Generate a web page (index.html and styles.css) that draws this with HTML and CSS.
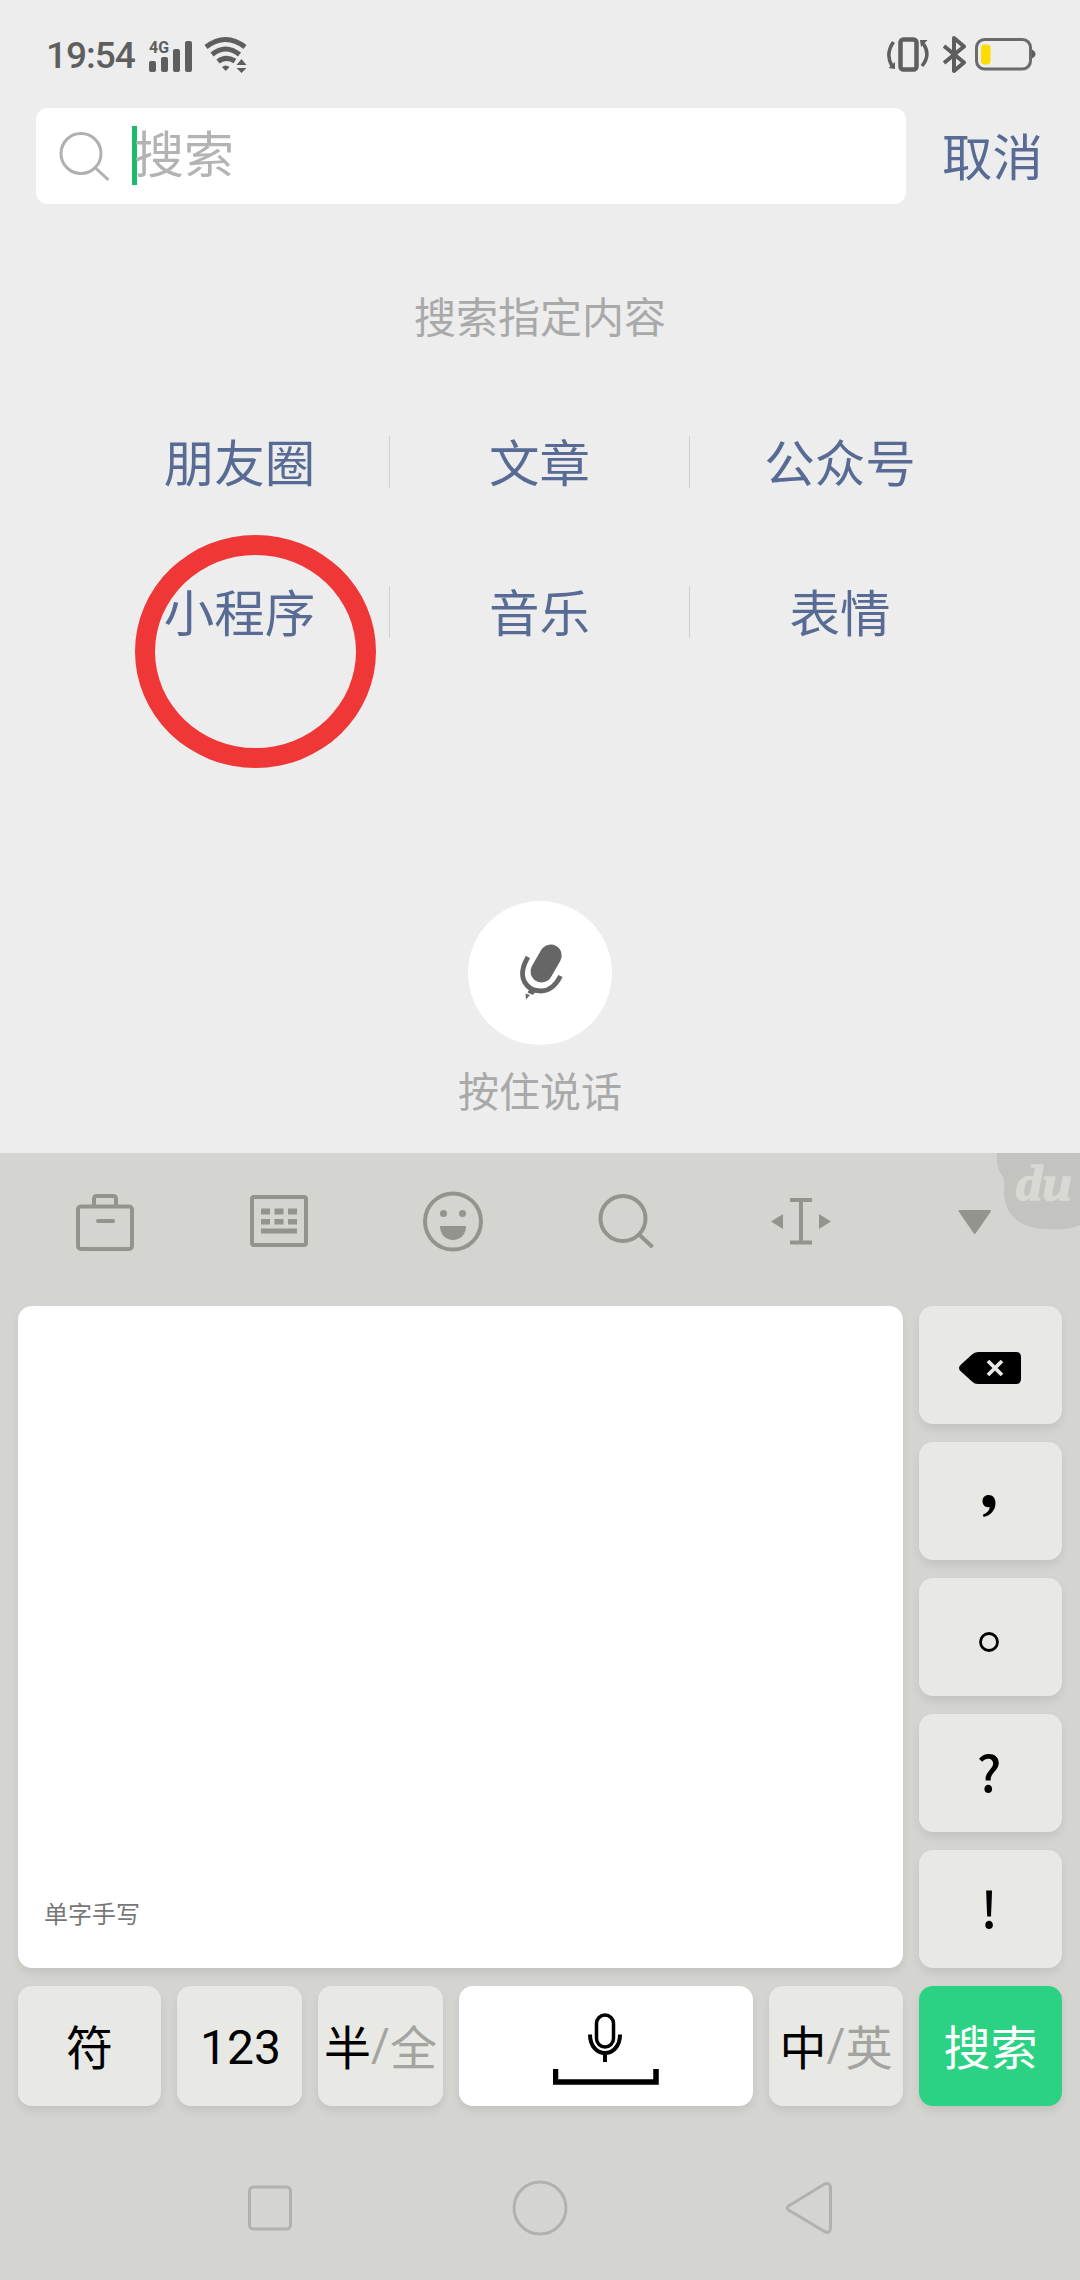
FILE: index.html
```html
<!DOCTYPE html>
<html lang="zh-CN">
<head>
  <meta charset="UTF-8">
  <meta name="viewport" content="width=device-width, initial-scale=1.0">
  <title>搜索</title>
  <link rel="stylesheet" href="styles.css">
</head>
<body>

  <div class="status-bar">
    <div class="status-left">
      <span class="time">19:54</span>
      <svg class="signal" width="46" height="38" viewBox="0 -4 46 38">
        <text class="net" x="0" y="13" textLength="20" lengthAdjust="spacingAndGlyphs">4G</text>
        <rect x="0" y="21" width="7" height="11" rx="2"/>
        <rect x="12" y="17" width="7" height="15" rx="2"/>
        <rect x="24" y="9" width="7" height="23" rx="2"/>
        <rect x="36" y="1" width="7" height="31" rx="2"/>
      </svg>
      <svg class="wifi" width="46" height="38" viewBox="0 0 46 38">
        <g fill="none" stroke="#5e5e5e" stroke-width="5">
          <path d="M2 11 Q21.500 -4 41 11"/>
          <path d="M8 18.500 Q21.500 7.500 35.500 18.500"/>
          <path d="M14 25.500 Q21.500 19.500 31 25"/>
        </g>
        <path d="M18 31 Q21.500 28 25.500 31 L21.700 35Z"/>
        <path d="M37.500 23 l5 6 h-10z M37.500 37 l5 -5 h-10z"/>
      </svg>
    </div>
    <div class="status-right">
      <svg width="44" height="38" viewBox="0 0 44 38">
        <rect x="14.500" y="3.500" width="16" height="30" rx="3" fill="none" stroke="#5e5e5e" stroke-width="4.500"/>
        <path d="M7.500 6 Q-1 18 6 30 M37.500 8 Q45 19 36 30" fill="none" stroke="#5e5e5e" stroke-width="3.500"/>
        <path d="M2.500 32 L9 26 V33Z M34 4 H41.500 L35 11Z"/>
      </svg>
      <svg width="28" height="42" viewBox="0 0 28 42">
        <path d="M1 12 L21 28.500 L11 37 V4 L21 12.500 L1 29" fill="none" stroke="#5e5e5e" stroke-width="4" stroke-linejoin="round"/>
      </svg>
      <svg class="battery" width="62" height="34" viewBox="0 0 62 34">
        <rect x="1.500" y="1.500" width="54" height="29.500" rx="8" fill="none" stroke="#696b6c" stroke-width="3"/>
        <path d="M57 11.500 q3.500 2 3.500 4.500 t-3.500 4.500z"/>
        <rect x="6" y="6.500" width="9.500" height="20" rx="3.500" fill="#fbdc05"/>
      </svg>
    </div>
  </div>

  <div class="search-row">
    <div class="search-box">
      <svg width="56" height="56" viewBox="0 0 56 56">
        <g fill="none" stroke="#b0b0b0" stroke-width="3">
          <circle cx="25" cy="24.500" r="20"/>
          <path d="M39 38.500 L52.500 51"/>
        </g>
      </svg>
      <span class="caret"></span>
      <span class="placeholder">搜索</span>
    </div>
    <a class="cancel">取消</a>
  </div>

  <div class="content">
    <p class="hint">搜索指定内容</p>
    <div class="types">
      <a>朋友圈</a>
      <a>文章</a>
      <a>公众号</a>
      <a class="marked">小程序</a>
      <a>音乐</a>
      <a>表情</a>
    </div>
    <div class="voice">
      <div class="voice-btn">
        <svg width="144" height="144" viewBox="-72 -72 144 144">
          <path d="M10.700 -17.500 L1.500 -1.500" stroke="#666" stroke-width="22" stroke-linecap="round"/>
          <path d="M-12 -16 C-25 6 -12 18 1 18 C10 18 16 12 20.500 3" fill="none" stroke="#666" stroke-width="4.800"/>
          <path d="M-9.500 14.500 l6 2.500 -3.500 5 -5.500 -2.500z M-14.500 20.500 l4.500 1.500 -4 4.500z" fill="#666"/>
        </svg>
      </div>
      <p class="voice-text">按住说话</p>
    </div>
  </div>

  <div class="keyboard">
    <div class="toolbar">
      <svg width="80" height="80" viewBox="-40 -40 80 80">
        <g fill="none" stroke="#93948e" stroke-width="4">
          <rect x="-27" y="-14.500" width="54" height="42.500" rx="3"/>
          <path d="M-11 -15 V-22 q0 -3 3 -3 H8 q3 0 3 3 V-15"/>
          <path d="M-7 0 H8" stroke-linecap="round"/>
        </g>
      </svg>
      <svg width="80" height="80" viewBox="-40 -40 80 80">
        <rect x="-27" y="-24" width="54" height="48" rx="2" fill="none" stroke="#93948e" stroke-width="4"/>
        <g fill="#93948e">
          <path d="M-18 -12.500h9v6h-9z M-4.500 -12.500h9v6h-9z M9 -12.500h9v6h-9z"/>
          <path d="M-18 -2h9v5.500h-9z M-4.500 -2h9v5.500h-9z M9 -2h9v5.500h-9z"/>
          <path d="M-18 7.500h36v5h-36z"/>
        </g>
      </svg>
      <svg width="80" height="80" viewBox="-40 -40 80 80">
        <circle cx="0" cy="0.500" r="28" fill="none" stroke="#93948e" stroke-width="4"/>
        <g fill="#93948e">
          <circle cx="-9.500" cy="-7.500" r="3.500"/>
          <circle cx="9.500" cy="-7.500" r="3.500"/>
          <path d="M-13 5 H13 C13 23.500 -13 23.500 -13 5Z"/>
        </g>
      </svg>
      <svg width="80" height="80" viewBox="-40 -40 80 80">
        <g fill="none" stroke="#93948e" stroke-width="4">
          <circle cx="-4" cy="-2.500" r="22.500"/>
          <path d="M12 13.500 L25.500 26"/>
        </g>
      </svg>
      <svg width="80" height="80" viewBox="-40 -40 80 80">
        <path d="M-11 -21 H11 M0 -21 V21.500 M-11 21.500 H11" stroke="#93948e" stroke-width="4"/>
        <path d="M-30 0.500 L-18 -7 V8Z M30 0.500 L18 -7 V8Z" fill="#93948e"/>
      </svg>
      <svg width="80" height="80" viewBox="-40 -40 80 80">
        <path d="M-15.500 -10 H15 L-0.300 12Z" fill="#93948e" stroke="#93948e" stroke-width="2" stroke-linejoin="round"/>
      </svg>
      <!-- skin logo in the corner -->
      <svg class="skin" width="84" height="78" viewBox="0 0 84 78">
        <path d="M1 0 H84 V72 Q70 78 52 76 C24 76 8 62 8 38 Q9 28 7 24 Q0 16 1 0Z" fill="#c3c4bf"/>
        <text x="20" y="47" textLength="56" lengthAdjust="spacingAndGlyphs">du</text>
      </svg>
    </div>

    <div class="pad">
      <div class="write-area">单字手写</div>
      <div class="key">
        <svg width="64" height="34" viewBox="0 0 64 34">
          <path d="M1 17 q0 -2 2 -3.500 L14 3.500 Q16.500 1 20 1 H58 q5 0 5 5 V28 q0 5 -5 5 H20 Q16.500 33 14 30.500 L3 20.500 Q1 19 1 17Z"/>
          <path d="M30 10 L44 24 M44 10 L30 24" stroke="#e8e9e4" stroke-width="3.800"/>
        </svg>
      </div>
      <div class="key">
        <svg width="20" height="28" viewBox="1 -2 20 28">
          <path d="M9.500 3 C14 3 16.500 6.500 16.500 11 C16.500 18 12 23.500 4.500 25 L4 22.500 C8 21 10.500 18.500 10.800 15 C6.500 16 3.500 13 3.500 9 C3.500 5.500 6 3 9.500 3Z"/>
        </svg>
      </div>
      <div class="key">
        <svg width="24" height="24" viewBox="1 0 24 24">
          <circle cx="12" cy="14" r="8.500" fill="none" stroke="#000" stroke-width="2.800"/>
        </svg>
      </div>
      <div class="key mark">?</div>
      <div class="key mark">!</div>
    </div>

    <div class="bottom-row">
      <div class="key k-sym">符</div>
      <div class="key k-num">123</div>
      <div class="key k-half">半<i>/</i><em>全</em></div>
      <div class="key k-space">
        <svg width="106" height="74" viewBox="0 0 106 74">
          <g fill="none" stroke="#000">
            <rect x="43.500" y="3" width="17" height="32" rx="8.500" stroke-width="3.500"/>
            <path d="M37 22.500 C37 47 67 47 67 22.500 M52 41 V50" stroke-width="4"/>
            <path d="M2.500 57 V70 H103 V57" stroke-width="5.500"/>
          </g>
        </svg>
      </div>
      <div class="key k-lang">中<i>/</i><em>英</em></div>
      <div class="key k-search">搜索</div>
    </div>

    <div class="nav-bar">
      <svg width="60" height="60" viewBox="-30 -30 60 60"><rect x="-20.500" y="-21" width="41" height="42" rx="4"/></svg>
      <svg width="60" height="60" viewBox="-30 -30 60 60"><circle cx="0" cy="0" r="26"/></svg>
      <svg width="60" height="60" viewBox="-30 -30 60 60"><path d="M-21.500 -2 L14.500 -24 Q20.500 -26 20.500 -20 V20 Q20.500 26 14.500 23.500 L-21.500 2 Q-24 0 -21.500 -2Z"/></svg>
    </div>
  </div>

</body>
</html>
```
FILE: styles.css
```css
* {
  box-sizing: border-box;
}

body {
  margin: 0;
  width: 1080px;
  height: 2280px;
  overflow: hidden;
  background-color: #ededed;
  font-family: "Noto Sans CJK SC", sans-serif;
}

p {
  margin: 0;
}

svg {
  display: block;
  flex-shrink: 0;
}

.status-bar {
  display: flex;
  justify-content: space-between;
  height: 108px;
  padding: 34px 43px 0 46px;
  color: #5e5e5e;
  fill: #5e5e5e;
}

.status-left,
.status-right {
  display: flex;
  align-items: center;
  height: 42px;
}

.time {
  width: 103px;
  margin-top: 1px;
  font: 500 37px/42px Roboto, sans-serif;
  letter-spacing: -1px;
}

.signal {
  margin-right: 9px;
  overflow: visible;
}

.net {
  font: 700 17px Roboto, sans-serif;
}

.status-right svg {
  margin-right: 13px;
}

.status-right svg + svg {
  margin-right: 4px;
}

.status-right .battery {
  margin-right: 0;
}

.search-row {
  display: flex;
  align-items: center;
  height: 96px;
  padding-left: 36px;
}

.search-box {
  display: flex;
  align-items: center;
  width: 870px;
  height: 96px;
  padding-left: 20px;
  border-radius: 12px;
  background-color: #fff;
}

.search-box svg {
  margin-top: 2px;
}

.caret {
  width: 5px;
  height: 59px;
  margin: -1px 0 0 20px;
  background-color: #1bbb6a;
}

.placeholder {
  margin: -10px 0 0 -3px;
  color: #b3b3b3;
  font-size: 50px;
  line-height: 60px;
}

.cancel {
  margin: -4px 0 0 36px;
  color: #576b95;
  font-size: 50.5px;
  line-height: 60px;
}

.content {
  height: 949px;
  padding-top: 83px;
}

.hint,
.voice-text {
  color: #a9a9a9;
  font-size: 42px;
  line-height: 56px;
  text-align: center;
}

.types {
  display: grid;
  grid-template-columns: repeat(3, 300px);
  row-gap: 98px;
  margin: 93px 90px 0;
}

.types a {
  position: relative;
  height: 52px;
  border-right: 1px solid #d0d0d0;
  color: #576b95;
  font-size: 50.5px;
  line-height: 48px;
  text-align: center;
}

.types a:nth-child(3n) {
  border-right: none;
}

.marked::after {
  content: "";
  box-sizing: border-box;
  position: absolute;
  left: 45px;
  top: -51px;
  width: 241px;
  height: 233px;
  border: 20px solid #f03737;
  border-radius: 50%;
}

.voice {
  display: flex;
  flex-direction: column;
  align-items: center;
  margin-top: 263px;
}

.voice-btn {
  border-radius: 50%;
  background-color: #fff;
}

.voice-text {
  margin-top: 16px;
  font-size: 41px;
}

.keyboard {
  height: 1127px;
  background-color: #d4d5d0;
}

.toolbar {
  position: relative;
  display: flex;
  justify-content: space-around;
  align-items: center;
  height: 153px;
  padding: 0 18px 17px;
}

.skin {
  position: absolute;
  right: 0;
  top: 0;
}

.skin text {
  fill: #d8d9d4;
  stroke: #d8d9d4;
  stroke-width: 1.5px;
  font: italic 700 50px "Liberation Serif", serif;
}

.pad {
  display: grid;
  grid-template-columns: 885px 143px;
  grid-template-rows: repeat(5, 118px);
  gap: 18px 16px;
  padding: 0 18px;
}

.write-area {
  grid-row: 1 / 6;
  display: flex;
  align-items: flex-end;
  padding: 0 0 37px 26px;
  border-radius: 14px;
  background-color: #fff;
  box-shadow: 0 5px 9px rgba(0, 0, 0, .08);
  color: #777;
  font-size: 24px;
  line-height: 36px;
}

.key {
  display: flex;
  justify-content: center;
  align-items: center;
  border-radius: 14px;
  background-color: #e8e9e4;
  box-shadow: 0 5px 9px rgba(0, 0, 0, .08);
  color: #000;
  font-size: 47px;
  line-height: 56px;
}

.pad .key svg {
  margin: 6px 2px 0 0;
}

.mark {
  padding: 0 3px 6px 0;
  font-size: 50px;
  font-weight: 500;
}

.bottom-row {
  display: flex;
  gap: 16px;
  margin-top: 18px;
  padding: 0 18px;
}

.bottom-row .key {
  height: 120px;
  padding-bottom: 3px;
}

.key i {
  color: #a3a49f;
  font: 400 46px/56px Roboto, sans-serif;
}

.key em {
  color: #a3a49f;
  font-style: normal;
}

.k-sym,
.k-search {
  width: 143px;
}

.bottom-row .k-num {
  width: 125px;
  padding: 4px 0 0 2px;
  font-family: Roboto, sans-serif;
  font-size: 48px;
}

.k-half {
  width: 125px;
}

.bottom-row .k-space {
  width: 294px;
  padding: 6px 0 0;
  background-color: #fff;
}

.k-lang {
  width: 134px;
}

.k-search {
  background-color: #2bd283;
  color: #fff;
}

.nav-bar {
  display: flex;
  justify-content: space-between;
  padding: 72px 240px 0;
}

.nav-bar svg {
  fill: none;
  stroke: #b1b2ae;
  stroke-width: 3;
}
```
